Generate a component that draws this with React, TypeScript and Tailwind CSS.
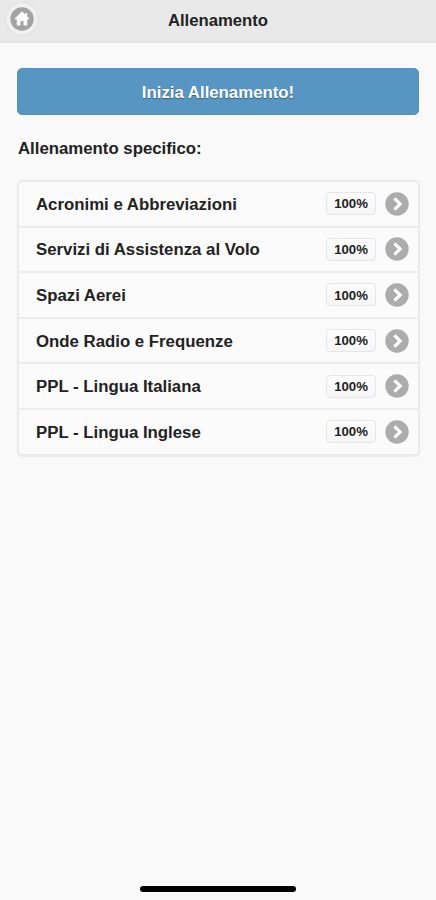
interface Topic { name: string; score: number; }

const TOPICS: Topic[] = [
  { name: "Acronimi e Abbreviazioni", score: 100 },
  { name: "Servizi di Assistenza al Volo", score: 100 },
  { name: "Spazi Aerei", score: 100 },
  { name: "Onde Radio e Frequenze", score: 100 },
  { name: "PPL - Lingua Italiana", score: 100 },
  { name: "PPL - Lingua Inglese", score: 100 },
];

function HomeIcon() {
  return (
    <svg viewBox="0 0 24 24" className="w-6 h-6">
      <circle cx="12" cy="12" r="11.7" fill="#a3a3a3" />
      <path d="M12 4.2 4.8 11.6l.8 1h1.2v5.8h3.7v-4.4h3v4.4h3.7v-5.8h1.2l.8-1-2-2V6.2H15v1z" fill="#fff" />
    </svg>
  );
}

function ArrowIcon() {
  return (
    <svg viewBox="0 0 24 24" className="w-6 h-6 shrink-0">
      <circle cx="12" cy="12" r="11.7" fill="#acacac" />
      <path d="m9.4 6.4 5.8 5.6-5.8 5.6" fill="none" stroke="#fff" strokeWidth="3.2" />
    </svg>
  );
}

export default function App() {
  return (
    <div className="flex flex-col h-[900px] bg-[#f9f9f9] font-['Liberation_Sans',Arial,sans-serif] font-bold text-[16.8px] text-[#222]">
      <header className="grid grid-cols-[44px_1fr_44px] items-start h-[43px] bg-[#e9e9e9] border-b border-[#e3e3e3]">
        <button aria-label="Home" className="flex items-center justify-center w-8 h-8 ml-[6px] mt-[3px] rounded-full bg-[#f0f0f0] shadow-[0_0_2px_rgba(0,0,0,0.1)]">
          <HomeIcon />
        </button>
        <h1 className="pt-[11px] text-center text-[16.7px] leading-5">Allenamento</h1>
      </header>

      <main className="flex-1 px-[17px] pt-[25px]">
        <button className="block w-[402px] h-[46.5px] pt-[2px] rounded-[5px] bg-[#5795c2] border border-[#5290bd] text-white [text-shadow:0_1px_1px_#3a6078]">
          Inizia Allenamento!
        </button>

        <h2 className="mt-[23.5px] pl-px pt-px leading-5">Allenamento specifico:</h2>

        {/* Topics */}
        <ul className="mt-[21px] w-[403px] rounded-[5px] border-2 border-[#ebebeb] bg-[#fbfbfb] shadow-[0_1px_1px_rgba(0,0,0,0.06)]">
          {TOPICS.map(t => (
            <li key={t.name} className="flex items-center h-[45.6px] pl-[17px] pr-[9px] border-b-2 border-[#ededed] last:h-[43.6px] last:border-b-0">
              <span className="flex-1 pt-[2px] leading-5">{t.name}</span>
              <span className="flex items-center justify-center w-[50px] h-[23px] pt-px mr-[9px] rounded-[4px] border border-[#e6e6e6] bg-linear-to-b from-[#fdfdfd] to-[#f6f6f6] text-[13.2px]">
                {t.score}%
              </span>
              <ArrowIcon />
            </li>
          ))}
        </ul>
      </main>

      <div className="w-[156px] h-[6px] mx-auto mb-[8px] rounded-full bg-black" />
    </div>
  );
}
